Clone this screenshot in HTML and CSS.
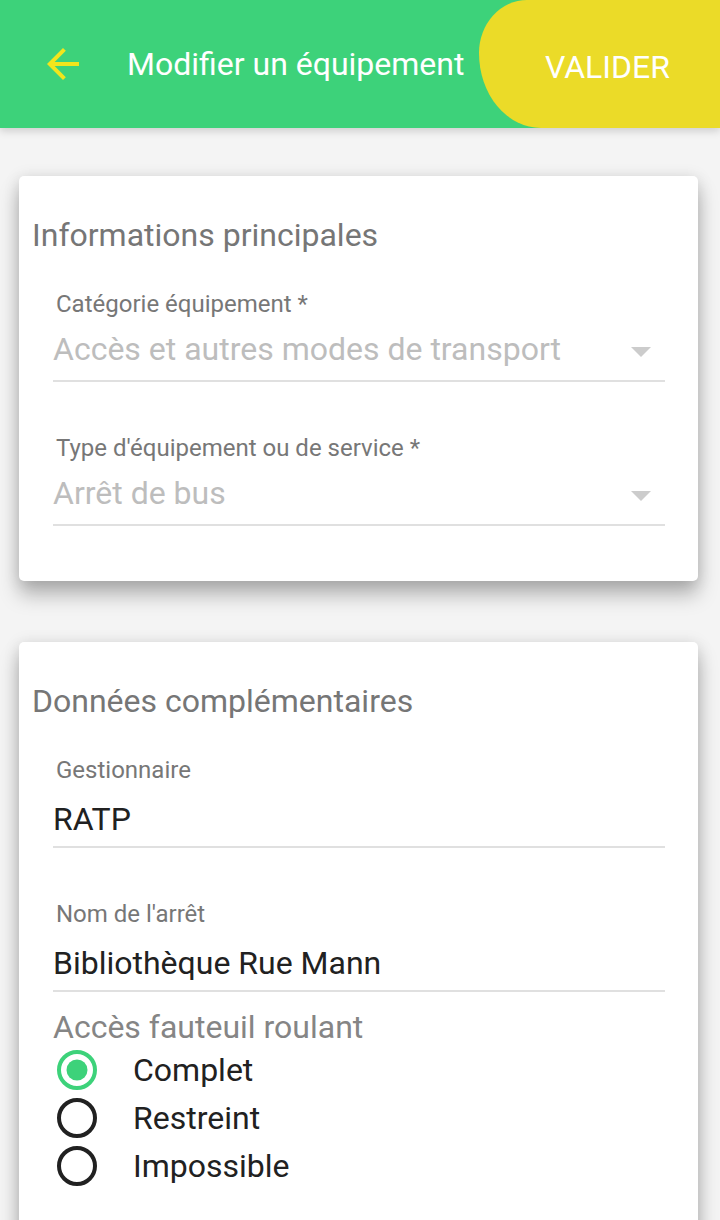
FILE: index.html
```html
<!DOCTYPE html>
<html lang="fr">
<head>
<meta charset="utf-8">
<title>Modifier un équipement</title>
<link rel="stylesheet" href="styles.css">
</head>
<body>
<header class="appbar">
  <div class="back">
    <svg width="48" height="48" viewBox="0 0 24 24"><path d="M20 11H7.83l5.59-5.59L12 4l-8 8 8 8 1.41-1.41L7.83 13H20v-2z" fill="#f2e51c"/></svg>
  </div>
  <h1 class="title">Modifier un équipement</h1>
  <div class="validate">VALIDER</div>
</header>
<main class="content">
  <section class="card">
    <h2 class="card-title">Informations principales</h2>
    <div class="field field-first">
      <label class="field-label">Catégorie équipement *</label>
      <div class="field-input field-select">
        <span class="placeholder">Accès et autres modes de transport</span>
        <svg class="caret" width="20" height="10" viewBox="0 0 20 10"><path d="M0 0h20L10 10z" fill="#cccccc"/></svg>
      </div>
    </div>
    <div class="field">
      <label class="field-label">Type d'équipement ou de service *</label>
      <div class="field-input field-select">
        <span class="placeholder">Arrêt de bus</span>
        <svg class="caret" width="20" height="10" viewBox="0 0 20 10"><path d="M0 0h20L10 10z" fill="#cccccc"/></svg>
      </div>
    </div>
  </section>
  <section class="card card-second">
    <h2 class="card-title">Données complémentaires</h2>
    <div class="field field-first">
      <label class="field-label">Gestionnaire</label>
      <div class="field-input field-text"><span class="value">RATP</span></div>
    </div>
    <div class="field">
      <label class="field-label">Nom de l'arrêt</label>
      <div class="field-input field-text"><span class="value">Bibliothèque Rue Mann</span></div>
    </div>
    <div class="legend">Accès fauteuil roulant</div>
    <div class="radio-group">
      <div class="radio-row">
        <svg class="radio" width="48" height="48" viewBox="0 0 48 48"><circle cx="24" cy="24" r="18" fill="none" stroke="#3dd27a" stroke-width="4"/><circle cx="24" cy="24" r="10.5" fill="#3dd27a"/></svg>
        <span class="radio-label">Complet</span>
      </div>
      <div class="radio-row">
        <svg class="radio" width="48" height="48" viewBox="0 0 48 48"><circle cx="24" cy="24" r="18" fill="none" stroke="#212121" stroke-width="4"/></svg>
        <span class="radio-label">Restreint</span>
      </div>
      <div class="radio-row">
        <svg class="radio" width="48" height="48" viewBox="0 0 48 48"><circle cx="24" cy="24" r="18" fill="none" stroke="#212121" stroke-width="4"/></svg>
        <span class="radio-label">Impossible</span>
      </div>
    </div>
  </section>
</main>
</body>
</html>
```
FILE: styles.css
```css
* { box-sizing: border-box; }
html, body {
  margin: 0;
  padding: 0;
  background: #f4f4f4;
  font-family: Roboto, "Liberation Sans", sans-serif;
}
.appbar {
  position: relative;
  z-index: 2;
  display: flex;
  align-items: center;
  height: 128px;
  background: #3dd27a;
  box-shadow: 0 3px 8px rgba(0, 0, 0, 0.16);
}
.back {
  flex: none;
  width: 48px;
  height: 48px;
  margin-left: 39px;
}
.back svg { display: block; }
.title {
  flex: 1;
  margin: 0 0 0 40px;
  font-size: 32px;
  font-weight: 400;
  line-height: 38px;
  color: #ffffff;
  white-space: nowrap;
}
.validate {
  flex: none;
  align-self: stretch;
  width: 241px;
  display: flex;
  align-items: center;
  padding: 6px 0 0 66px;
  background: #ebdb28;
  border-radius: 48px 0 0 62px / 53px 0 0 75px;
  font-size: 32px;
  line-height: 38px;
  color: #ffffff;
}
.content {
  padding: 48px 22px 0 19px;
}
.card {
  background: #ffffff;
  border-radius: 5px;
  padding: 40px 0 55px 0;
  box-shadow: 0 14px 20px rgba(0, 0, 0, 0.26), 0 2px 16px rgba(0, 0, 0, 0.13);
}
.card-second {
  margin-top: 61px;
  padding-bottom: 48px;
}
.card-title {
  margin: 0 0 0 13px;
  font-size: 32px;
  font-weight: 400;
  line-height: 38px;
  color: #767676;
}
.field {
  margin: 48px 33px 0 34px;
  padding-top: 6px;
  height: 96px;
  border-bottom: 2px solid #e0e0e0;
}
.field-first { margin-top: 32px; }
.field-label {
  display: block;
  margin: 0 0 0 3px;
  font-size: 24px;
  line-height: 24px;
  color: #777777;
}
.field-input {
  display: flex;
  align-items: center;
  height: 38px;
  font-size: 32px;
  line-height: 38px;
}
.field-select { margin-top: 14px; }
.field-text { margin-top: 18px; }
.placeholder {
  flex: 1;
  color: #bdbdbd;
  white-space: nowrap;
}
.value {
  flex: 1;
  color: #212121;
  white-space: nowrap;
}
.caret {
  flex: none;
  margin: 6px 14px 0 0;
}
.legend {
  margin: 16px 0 0 34px;
  font-size: 32px;
  line-height: 38px;
  color: #858585;
}
.radio-group {
  margin-left: 34px;
}
.radio-row {
  display: flex;
  align-items: center;
  height: 48px;
}
.radio { flex: none; display: block; }
.radio-label {
  margin-left: 32px;
  font-size: 32px;
  line-height: 38px;
  color: #212121;
}
```
